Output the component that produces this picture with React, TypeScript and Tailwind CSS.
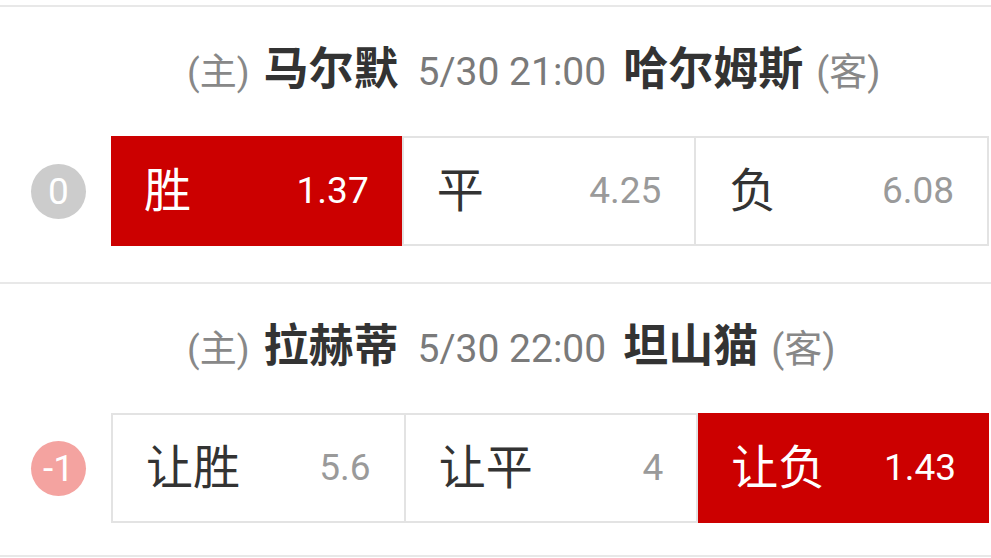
import React from "react";

type Cell = { label: string; odds: string; active?: boolean };
type Match = {
  home: string;
  away: string;
  time: string;
  badge: string;
  badgeClass: string;
  cells: Cell[];
};

const matches: Match[] = [
  {
    home: "马尔默",
    away: "哈尔姆斯",
    time: "5/30 21:00",
    badge: "0",
    badgeClass: "bg-[#cccccc]",
    cells: [
      { label: "胜", odds: "1.37", active: true },
      { label: "平", odds: "4.25" },
      { label: "负", odds: "6.08" },
    ],
  },
  {
    home: "拉赫蒂",
    away: "坦山猫",
    time: "5/30 22:00",
    badge: "-1",
    badgeClass: "bg-[#f4a3a0]",
    cells: [
      { label: "让胜", odds: "5.6" },
      { label: "让平", odds: "4" },
      { label: "让负", odds: "1.43", active: true },
    ],
  },
];

const font = "font-['Roboto','Noto_Sans_CJK_SC',sans-serif]";

function Section({ m, last }: { m: Match; last?: boolean }) {
  return (
    <div className={last ? "pb-[32px]" : "pb-[36px]"}>
      <div className="h-[129px] flex items-center justify-start pl-[187px] pb-[4px]">
        <div className="flex items-baseline">
          <span className="text-[37px] text-[#888888]">(主)</span>
          <span className="text-[45px] font-bold text-[#333333] ml-[14px]">{m.home}</span>
          <span className="text-[39px] text-[#7a7a7a] ml-[19px]">{m.time}</span>
          <span className="text-[45px] font-bold text-[#333333] ml-[17px]">{m.away}</span>
          <span className="text-[38px] text-[#888888] ml-[13px]">(客)</span>
        </div>
      </div>
      <div className="flex items-center h-[110px]">
        <div className="w-[111px] flex justify-start pl-[31px]">
          <div
            className={`w-[55px] h-[55px] rounded-full ${m.badgeClass} flex items-center justify-center text-white text-[37px] leading-none`}
          >
            {m.badge}
          </div>
        </div>
        <div className="w-[878px] h-[110px] flex border-2 border-[#e3e3e3]">
          {m.cells.map((c, i) => (
            <div
              key={i}
              className={`flex-1 flex items-center justify-between pl-[33px] pr-[33px] ${
                i > 0 ? "border-l-2 border-[#e3e3e3]" : ""
              } ${c.active ? "bg-[#cc0000] -my-[2px] first:-ml-[2px] last:-mr-[2px]" : ""}`}
            >
              <span
                className={`text-[47px] ${c.active ? "text-white" : "text-[#333333]"}`}
              >
                {c.label}
              </span>
              <span
                className={`text-[37px] ${c.active ? "text-white" : "text-[#9a9a9a]"}`}
              >
                {c.odds}
              </span>
            </div>
          ))}
        </div>
      </div>
    </div>
  );
}

export default function App() {
  return (
    <div className={`w-[991px] h-[558px] bg-white overflow-hidden ${font}`}>
      <div className="pt-[5px]">
        <div className="h-[2px] bg-[#e8e8e8]" />
        <Section m={matches[0]} />
        <div className="h-[2px] bg-[#e8e8e8]" />
        <Section m={matches[1]} last />
        <div className="h-[2px] bg-[#e8e8e8]" />
      </div>
    </div>
  );
}
